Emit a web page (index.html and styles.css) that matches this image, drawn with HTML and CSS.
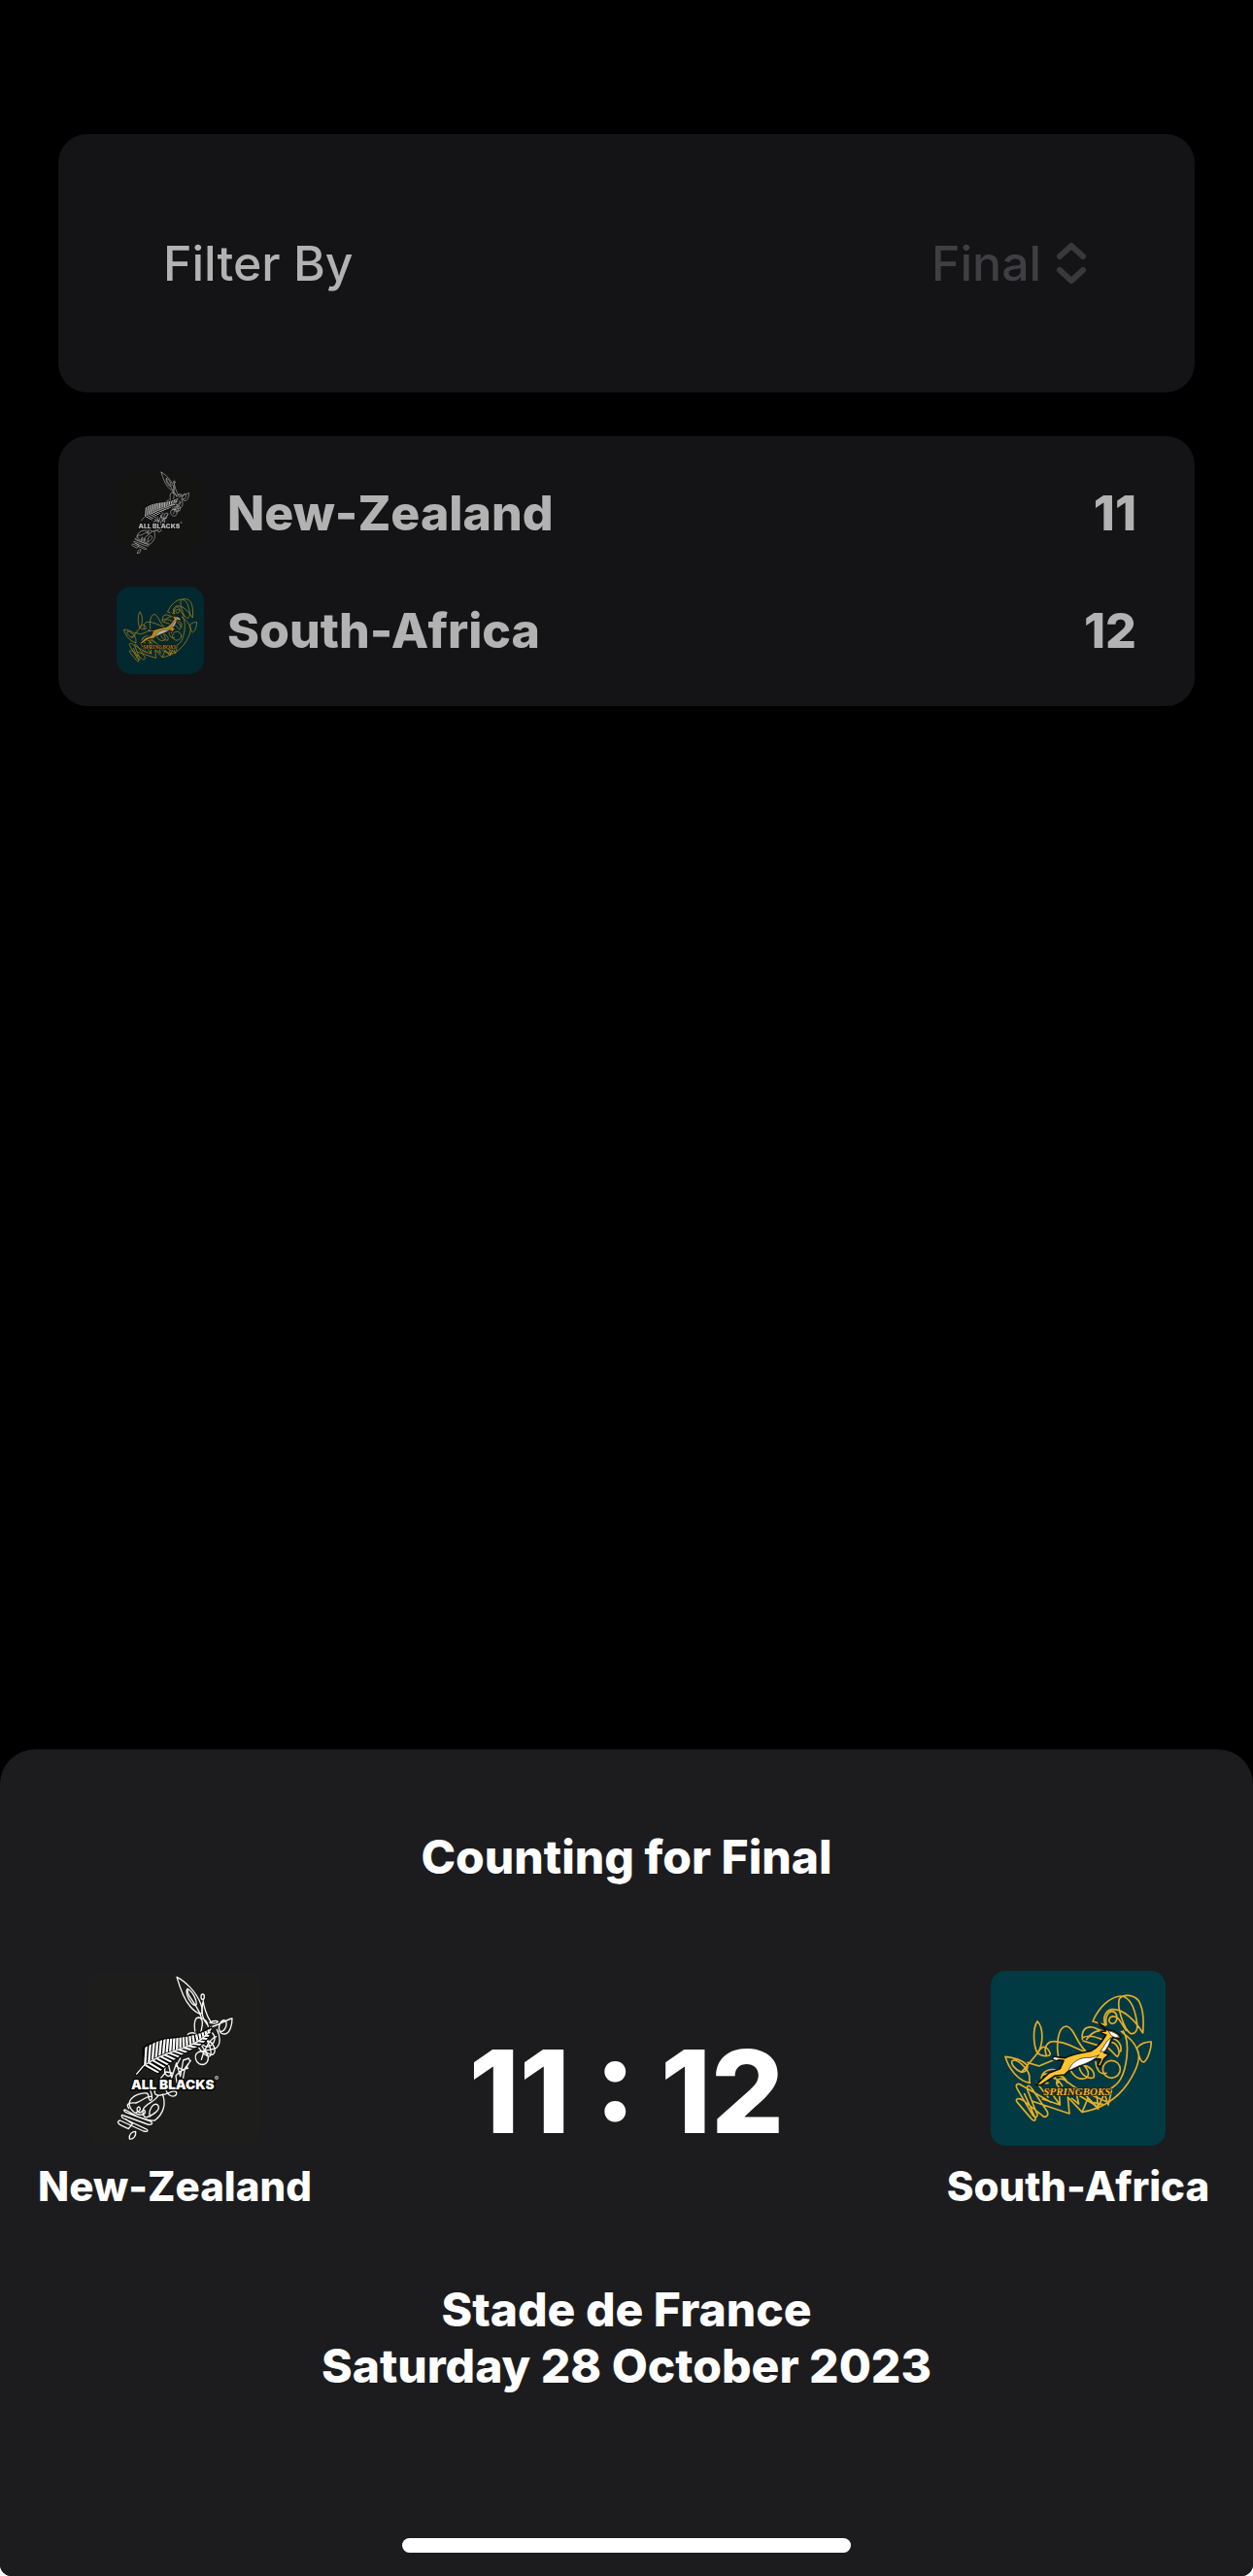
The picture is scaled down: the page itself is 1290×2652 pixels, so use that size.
FILE: index.html
```html
<!DOCTYPE html>
<html lang="en">
<head>
<meta charset="utf-8">
<meta name="viewport" content="width=device-width, initial-scale=1">
<title>Counting for Final</title>
<link rel="stylesheet" href="styles.css">
</head>
<body>
<div class="screen">
  <main class="content">
    <form class="card filter">
      <label class="filter-label" for="stage">Filter By</label>
      <span class="picker">
        <select class="picker-select" id="stage"><option>Final</option></select>
        <svg class="picker-icon" viewBox="0 0 30 42" aria-hidden="true"><path d="M3 14L15 3L27 14M3 28L15 39L27 28"/></svg>
      </span>
    </form>
    <ul class="card teams">
      <li class="team">
        <svg class="team-logo" viewBox="30 24 540 540" role="img" aria-label="All Blacks"><use href="#all-blacks"/></svg>
        <span class="team-name">New-Zealand</span>
        <span class="team-count">11</span>
      </li>
      <li class="team">
        <svg class="team-logo" viewBox="30 24 540 540" role="img" aria-label="Springboks"><use href="#springboks"/></svg>
        <span class="team-name">South-Africa</span>
        <span class="team-count">12</span>
      </li>
    </ul>
  </main>

  <section class="sheet">
    <h1 class="sheet-title">Counting for Final</h1>
    <div class="match">
      <div class="side">
        <svg class="side-logo" viewBox="30 24 540 540" role="img" aria-label="All Blacks">
          <clipPath id="fern-top"><path d="M203 318V264C225 250 250 238 280 234C330 228 370 226 412 200C385 243 330 258 280 274C250 285 225 299 203 318Z"/></clipPath>
          <clipPath id="fern-low"><path d="M206 319C230 301 255 288 285 277C335 260 385 245 412 204C408 235 385 252 362 262C325 280 290 300 248 340C232 335 215 328 206 319Z"/></clipPath>
          <g id="all-blacks">
            <rect x="30" y="24" width="540" height="540" fill="#1d1d1b"/>
            <g fill="none" stroke="#f6f6f4" stroke-width="4" stroke-linejoin="round" stroke-linecap="round">
              <path d="M306 43C332 56 366 88 381 128C386 143 387 153 379 157C357 151 337 124 326 99C317 78 311 60 306 43Z"/>
              <path d="M339 79C332 86 339 108 350 121C358 131 364 134 367 127C367 112 356 91 345 83C337 77 337 85 344 100L366 134C374 147 378 157 382 168"/>
              <ellipse cx="386" cy="104" rx="5" ry="8"/>
              <path d="M387 112C388 130 398 164 412 183M386 122C382 145 381 170 400 190M362 210C358 185 362 168 374 168C388 170 387 188 380 214M340 220C349 212 361 215 372 220M376 169C391 170 401 181 403 196"/>
              <path d="M408 184C420 176 433 178 433 182C428 188 415 186 408 184M410 198C435 193 454 177 477 171C477 190 471 216 455 219C438 220 432 203 440 185C450 170 463 175 458 196C454 207 447 213 438 211"/>
              <path d="M430 205C441 225 442 251 428 262C410 270 380 268 367 279C360 288 364 304 375 311C389 318 403 309 403 294C403 279 389 266 373 275M395 235C403 240 417 276 409 287C397 293 376 265 368 254M380 249C389 270 405 286 418 282C430 272 420 246 402 240M428 227C409 232 389 270 382 298M416 216C430 231 421 250 407 257C395 260 386 253 382 246"/>
              <path d="M281 316L290 354L305 309L317 350L326 300L343 294L347 303L334 326L316 335L303 348L306 369L325 359L331 325L349 301M270 324C264 344 282 360 291 339L273 336L257 355M317 294L304 318L323 330L341 324"/>
              <path d="M272 391C276 404 288 415 300 410C308 405 307 395 298 396C287 394 276 408 262 406C246 412 235 407 238 393M224 393C232 411 231 425 223 424C216 418 222 404 213 402C195 399 169 410 161 426C154 444 171 461 184 466C198 472 212 466 207 455C200 449 197 466 190 461C182 456 180 449 188 444C197 446 193 461 181 460M250 408C237 430 211 433 203 450C198 465 204 479 214 476C238 467 258 451 247 438C233 427 216 459 224 474M262 405C273 433 267 464 238 486C225 489 205 481 187 475L147 453C139 451 144 460 154 463L222 488C236 493 229 502 216 498L142 471C133 465 134 476 142 480L208 511C221 516 216 523 203 519L131 486C119 489 125 498 136 502L157 512L169 496L148 482M158 449C148 434 157 431 180 432C198 426 215 408 229 413"/>
              <path d="M160 543C157 529 168 520 179 520C181 533 172 546 160 543Z"/>
            </g>
            <path d="M176 346L200 314V260C235 234 278 227 325 227C365 221 390 207 415 194C418 225 393 253 363 265C320 282 282 311 250 343L205 323L184 348Z" fill="#050505"/>
            <g stroke="#fff" fill="none">
              <path clip-path="url(#fern-top)" stroke-width="7" d="M207 330L213 240M218 330L225 240M229 320L237 230M240 315L248 225M251 310L259 220M262 305L270 220M273 300L280 220M284 295L290 215M295 290L299 215M306 285L308 215M317 280L317 215M328 275L326 210M339 270L335 210M350 265L344 205M361 260L353 205M372 250L362 200M382 245L371 195M391 235L380 195M399 230L390 190M406 220L400 190"/>
              <path clip-path="url(#fern-low)" stroke-width="6" d="M200 310L270 350M210 302L275 341M220 294L286 331M230 287L296 323M241 281L305 313M253 276L316 305M266 271L327 295M279 266L338 287M293 261L349 279M307 256L360 270M322 251L370 262M337 245L382 253M352 238L394 244M366 230L404 235M379 222L412 226M391 213L418 216"/>
              <path stroke-width="4" d="M181 344L202 319C237 292 280 278 315 266C358 251 392 236 412 202"/>
            </g>
            <text class="crest-blacks" x="165" y="389">ALL BLACKS</text>
            <circle cx="429" cy="354" r="5" fill="#777" stroke="#bbb" stroke-width="2"/>
          </g>
        </svg>
        <span class="side-name">New-Zealand</span>
      </div>
      <p class="score">11 : 12</p>
      <div class="side">
        <svg class="side-logo" viewBox="30 24 540 540" role="img" aria-label="Springboks">
          <g id="springboks">
            <rect x="30" y="24" width="540" height="540" fill="#023a43"/>
            <g fill="none" stroke="#e5ad27" stroke-width="5" stroke-linejoin="round" stroke-linecap="round">
              <path d="M380 190L345 180C363 138 397 103 434 102C464 107 475 142 481 180C486 207 477 221 461 217C440 202 419 134 427 111C439 94 473 97 488 118C504 149 502 186 500 216C476 177 439 140 404 143C384 147 375 168 384 193M387 190C382 165 394 149 407 149C421 153 424 172 414 184C401 192 390 181 399 168C409 160 424 168 431 181L448 208"/>
              <path d="M433 211C456 230 475 244 483 269C490 297 496 308 504 305C514 298 526 267 526 243C508 242 489 250 481 264C496 289 481 330 453 372C430 405 387 448 312 460L330 418L352 437L362 450L356 395M439 210C464 249 447 330 431 358C417 382 400 386 394 392"/>
              <path d="M174 180C158 203 162 255 174 278C188 290 213 289 214 280C206 258 190 250 179 272C160 296 145 315 124 337M174 180C193 198 194 252 174 278M124 337C105 328 91 312 96 302C110 292 145 326 149 347C151 362 148 367 151 370C115 364 85 326 75 289C97 290 137 302 144 320C142 334 133 337 124 337M144 307L179 318L230 297"/>
              <path d="M202 284C192 262 204 242 224 242C259 241 288 262 323 274M240 294C232 260 235 197 263 195C289 199 295 251 326 274M313 235C310 208 322 195 344 198C358 201 365 210 375 209M314 230C334 220 360 229 380 239M326 236C343 210 369 203 385 214M315 240L360 254M405 245C424 250 432 279 421 289C411 285 403 266 385 257M400 230C421 234 437 253 431 273"/>
              <circle cx="403" cy="328" r="27"/>
              <path d="M278 315C270 333 293 361 317 357C344 352 329 320 307 309M303 319C307 345 331 360 348 353C354 336 335 318 318 317M354 305C357 335 372 346 387 340M248 337C230 324 204 326 191 342C181 359 190 374 207 370M189 347C208 334 230 346 238 370M215 352C235 341 259 348 265 368M240 383C225 368 238 351 258 361L303 393M199 371C210 345 233 350 251 379"/>
              <path d="M207 414L173 371M216 430L126 378C114 368 104 374 112 389L158 467C169 483 179 475 170 459L145 396C138 377 148 373 157 388L205 459C210 473 197 480 188 470L131 425C116 414 103 419 112 430L154 479C163 491 172 487 166 475L134 404M159 427L273 465L268 414L312 460M190 420L244 438L209 389M244 438L241 400M280 418L302 435L294 401M325 410L360 449L381 403L393 438L403 394M342 408L391 430M350 431L376 436M305 410L351 438"/>
            </g>
            <g stroke="#101010" stroke-linejoin="round">
              <path d="M363 183L386 204L393 207C409 208 424 216 431 228L426 234L407 230C399 239 397 253 389 263L380 277L395 282L380 296L369 319L360 317L370 297L352 295C329 311 293 322 269 335L258 345L229 348L184 377L170 376L209 340L244 326L255 301L222 298L224 289L260 293C277 282 306 279 340 271C361 262 374 241 386 222L373 217L370 211L385 210Z" fill="#fcc431" stroke-width="5"/>
              <path d="M270 333C277 312 297 293 326 292C339 294 352 288 365 284C352 296 327 311 303 317ZM393 209C408 212 422 219 427 228L415 230L402 224ZM368 273C381 258 386 240 401 230C399 249 390 261 382 273Z" fill="#fff" stroke-width="2"/>
              <path d="M225 291L243 295L234 299L223 297Z" fill="#fff" stroke="none"/>
            </g>
            <text class="crest-boks" x="193" y="407">SPRINGBOKS</text>
          </g>
        </svg>
        <span class="side-name">South-Africa</span>
      </div>
    </div>
    <p class="venue">Stade de France<br>Saturday 28 October 2023</p>
    <div class="home-indicator"></div>
  </section>
</div>
</body>
</html>
```
FILE: styles.css
```css
* {
  box-sizing: border-box;
}

body {
  margin: 0;
  background: #fff;
  color: #fff;
  font-family: Inter, "Liberation Sans", sans-serif;
}

.screen {
  display: flex;
  flex-direction: column;
  min-height: 100vh;
  border-radius: 0 0 12px 12px;
  background: #000;
}

.content {
  display: flex;
  flex-direction: column;
  gap: 45px;
  padding: 138px 60px 60px;
}

.card {
  margin: 0;
  border-radius: 30px;
  background: #141416;
  color: #b2b2b2;
  font-size: 50px;
  line-height: 66px;
}

.filter {
  display: flex;
  align-items: center;
  justify-content: space-between;
  padding: 100px 112px 100px 108px;
}

.filter-label {
  font-weight: 500;
}

.picker {
  display: flex;
  align-items: center;
  gap: 15px;
}

.picker-select {
  appearance: none;
  padding: 0;
  border: 0;
  background: none;
  color: #3f3f43;
  font: inherit;
  font-weight: 500;
}

.picker-icon {
  width: 30px;
  height: 42px;
  fill: none;
  stroke: #39393b;
  stroke-width: 6;
  stroke-linecap: round;
  stroke-linejoin: round;
}

.teams {
  display: flex;
  flex-direction: column;
  gap: 31px;
  padding: 34px 60px 33px;
  list-style: none;
  font-weight: 800;
}

.team {
  display: flex;
  align-items: center;
  gap: 24px;
}

.team-logo {
  width: 90px;
  height: 90px;
  border-radius: 15px;
  filter: brightness(0.7);
}

.team-count {
  margin-left: auto;
  font-kerning: none;
}

.sheet {
  display: flex;
  flex-direction: column;
  align-items: center;
  margin-top: auto;
  padding: 82px 36px 24px;
  border-radius: 36px 36px 12px 12px;
  background: #1c1c1e;
  font-weight: 800;
}

.sheet-title {
  margin: 0 0 88px;
  font-size: 48px;
  font-weight: inherit;
  line-height: 58px;
}

.match {
  display: grid;
  grid-template-columns: 288px 1fr 288px;
  align-items: center;
  align-self: stretch;
}

.side {
  display: flex;
  flex-direction: column;
  align-items: center;
  gap: 16px;
}

.side-logo {
  width: 180px;
  height: 180px;
  border-radius: 15px;
}

.side-name {
  font-size: 42px;
  line-height: 52px;
}

.score {
  margin: 0;
  font-size: 118px;
  font-kerning: none;
  line-height: 140px;
  text-align: center;
}

.venue {
  margin: 72px 0 148px;
  font-size: 48px;
  line-height: 58px;
  text-align: center;
}

.home-indicator {
  width: 38%;
  height: 15px;
  border-radius: 8px;
  background: #fff;
}

.crest-blacks {
  fill: #fff;
  stroke: #000;
  stroke-width: 8px;
  paint-order: stroke;
  font-family: Inter, sans-serif;
  font-size: 41px;
  font-weight: 900;
}

.crest-boks {
  fill: #f0b62c;
  stroke: #2b2112;
  stroke-width: 5px;
  paint-order: stroke;
  font-family: "Liberation Serif", serif;
  font-size: 33px;
  font-style: italic;
  font-weight: 700;
}
```
